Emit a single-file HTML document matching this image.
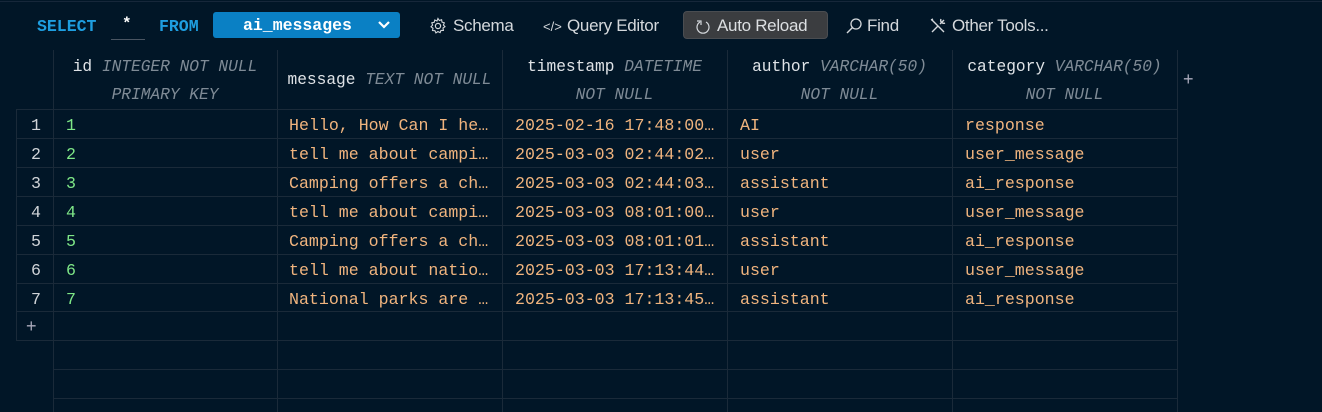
<!DOCTYPE html><html><head><meta charset="utf-8"><style>
body{margin:0;width:1322px;height:412px;background:#011627;overflow:hidden;position:relative;font-family:"Liberation Sans",sans-serif;}
.a{position:absolute;white-space:nowrap}
.mono{font-family:"Liberation Mono",monospace;}
.tb{font-size:17px;color:#d4d8dc;top:16px;letter-spacing:-0.3px}
.vl{position:absolute;width:1px;background:#1a2a39}
.hl{position:absolute;height:1px;background:#1a2a39}
.c{position:absolute;font-family:"Liberation Mono",monospace;font-size:16.6px;white-space:nowrap;color:#f0b47e}
.h{position:absolute;font-family:"Liberation Mono",monospace;font-size:16.2px;color:#dfe3e7;text-align:center;line-height:28px}
.h i{color:#7f8b96}
.n{color:#d0d4d8;text-align:right;width:24px;left:17px}
.g{color:#7ee787}
</style></head><body>
<div class="hl" style="left:0;top:1px;width:1322px;background:#16273a"></div>
<div class="a mono" style="left:37px;top:17px;font-size:16.5px;font-weight:bold;color:#1e9ee0">SELECT</div>
<div class="a mono" style="left:122px;top:15px;font-size:16px;font-weight:bold;color:#fff">*</div>
<div class="hl" style="left:111px;top:39px;width:34px;background:#4a5562"></div>
<div class="a mono" style="left:159px;top:17px;font-size:16.5px;font-weight:bold;color:#1e9ee0">FROM</div>
<div class="a" style="left:213px;top:12px;width:187px;height:26px;background:#0a80c4;border-radius:3px"></div>
<div class="a mono" style="left:243px;top:16px;font-size:16.5px;font-weight:bold;color:#fff">ai_messages</div>
<svg class="a" style="left:377px;top:20px" width="14" height="10"><path d="M2 2l5 5 5-5" stroke="#fff" stroke-width="2.2" fill="none"/></svg>
<svg class="a" style="left:429px;top:17px" width="18" height="18" viewBox="0 0 18 18"><circle cx="9" cy="9" r="2.6" stroke="#d4d8dc" fill="none" stroke-width="1.2"/><path d="M9 1.5l1.3 2 2.3-.8.4 2.4 2.3.7-.9 2.2 1.6 1.7-2 1.3.4 2.4-2.4 0-.9 2.2-2.2-1.1-2 1.4-1-2.2-2.4-.2.5-2.3-2-1.4 1.6-1.7-.8-2.3 2.4-.5.6-2.3 2.2 1z" stroke="#d4d8dc" fill="none" stroke-width="1.1"/></svg>
<div class="a tb" style="left:453px">Schema</div>
<div class="a" style="left:543px;top:19px;font-size:13px;color:#d4d8dc">&lt;/&gt;</div>
<div class="a tb" style="left:567px">Query Editor</div>
<div class="a" style="left:683px;top:11px;width:145px;height:28px;background:#3b3d40;border-radius:4px;border:1px solid #4a4d51;box-sizing:border-box"></div>
<svg class="a" style="left:695px;top:18px" width="16" height="18"><path d="M5 4A6 6 0 1 0 11 4" stroke="#d4d8dc" fill="none" stroke-width="1.2"/><path d="M2 3h4v4" stroke="#d4d8dc" fill="none" stroke-width="1.2"/></svg>
<div class="a tb" style="left:717px;color:#dcdfe2">Auto Reload</div>
<svg class="a" style="left:845px;top:17px" width="18" height="18"><circle cx="11" cy="7" r="5" stroke="#d4d8dc" fill="none" stroke-width="1.3"/><path d="M7.5 10.5L2 16" stroke="#d4d8dc" stroke-width="1.4"/></svg>
<div class="a tb" style="left:867px">Find</div>
<svg class="a" style="left:929px;top:17px" width="18" height="18"><path d="M3 3l12 12M3 15L9 9M11 7l4-4M12 2a3 3 0 0 0 4 4M2 3l2-1" stroke="#d4d8dc" fill="none" stroke-width="1.4"/></svg>
<div class="a tb" style="left:952px">Other Tools...</div>

<div class="vl" style="left:53px;top:50px;height:362px"></div>
<div class="vl" style="left:277px;top:50px;height:362px"></div>
<div class="vl" style="left:502px;top:50px;height:362px"></div>
<div class="vl" style="left:727px;top:50px;height:362px"></div>
<div class="vl" style="left:952px;top:50px;height:362px"></div>
<div class="vl" style="left:1177px;top:50px;height:362px"></div>
<div class="vl" style="left:16px;top:109px;height:232px"></div>
<div class="hl" style="left:16px;top:109px;width:1161px"></div>
<div class="hl" style="left:16px;top:138px;width:1161px"></div>
<div class="hl" style="left:16px;top:167px;width:1161px"></div>
<div class="hl" style="left:16px;top:196px;width:1161px"></div>
<div class="hl" style="left:16px;top:225px;width:1161px"></div>
<div class="hl" style="left:16px;top:254px;width:1161px"></div>
<div class="hl" style="left:16px;top:283px;width:1161px"></div>
<div class="hl" style="left:16px;top:311px;width:1161px"></div>
<div class="hl" style="left:16px;top:340px;width:1161px"></div>
<div class="hl" style="left:53px;top:369px;width:1124px"></div>
<div class="hl" style="left:53px;top:398px;width:1124px"></div>

<div class="h" style="left:53px;top:53px;width:224px">id <i>INTEGER NOT NULL</i><br><i>PRIMARY KEY</i></div>
<div class="h" style="left:277px;top:66px;width:225px">message <i>TEXT NOT NULL</i></div>
<div class="h" style="left:502px;top:53px;width:225px">timestamp <i>DATETIME</i><br><i>NOT NULL</i></div>
<div class="h" style="left:727px;top:53px;width:225px">author <i>VARCHAR(50)</i><br><i>NOT NULL</i></div>
<div class="h" style="left:952px;top:53px;width:225px">category <i>VARCHAR(50)</i><br><i>NOT NULL</i></div>
<div class="a" style="left:1183px;top:69px;font-size:18px;color:#aab">+</div>
<div class="a" style="left:26px;top:316px;font-size:18px;color:#aab">+</div>

<div style="position:absolute;left:0;top:116px">
<div class="c n" style="top:0">1</div><div class="c g" style="left:66px;top:0">1</div><div class="c" style="left:289px;top:0">Hello, How Can I he…</div><div class="c" style="left:515px;top:0">2025-02-16 17:48:00…</div><div class="c" style="left:740px;top:0">AI</div><div class="c" style="left:965px;top:0">response</div>
<div class="c n" style="top:29px">2</div><div class="c g" style="left:66px;top:29px">2</div><div class="c" style="left:289px;top:29px">tell me about campi…</div><div class="c" style="left:515px;top:29px">2025-03-03 02:44:02…</div><div class="c" style="left:740px;top:29px">user</div><div class="c" style="left:965px;top:29px">user_message</div>
<div class="c n" style="top:58px">3</div><div class="c g" style="left:66px;top:58px">3</div><div class="c" style="left:289px;top:58px">Camping offers a ch…</div><div class="c" style="left:515px;top:58px">2025-03-03 02:44:03…</div><div class="c" style="left:740px;top:58px">assistant</div><div class="c" style="left:965px;top:58px">ai_response</div>
<div class="c n" style="top:87px">4</div><div class="c g" style="left:66px;top:87px">4</div><div class="c" style="left:289px;top:87px">tell me about campi…</div><div class="c" style="left:515px;top:87px">2025-03-03 08:01:00…</div><div class="c" style="left:740px;top:87px">user</div><div class="c" style="left:965px;top:87px">user_message</div>
<div class="c n" style="top:116px">5</div><div class="c g" style="left:66px;top:116px">5</div><div class="c" style="left:289px;top:116px">Camping offers a ch…</div><div class="c" style="left:515px;top:116px">2025-03-03 08:01:01…</div><div class="c" style="left:740px;top:116px">assistant</div><div class="c" style="left:965px;top:116px">ai_response</div>
<div class="c n" style="top:145px">6</div><div class="c g" style="left:66px;top:145px">6</div><div class="c" style="left:289px;top:145px">tell me about natio…</div><div class="c" style="left:515px;top:145px">2025-03-03 17:13:44…</div><div class="c" style="left:740px;top:145px">user</div><div class="c" style="left:965px;top:145px">user_message</div>
<div class="c n" style="top:174px">7</div><div class="c g" style="left:66px;top:174px">7</div><div class="c" style="left:289px;top:174px">National parks are …</div><div class="c" style="left:515px;top:174px">2025-03-03 17:13:45…</div><div class="c" style="left:740px;top:174px">assistant</div><div class="c" style="left:965px;top:174px">ai_response</div>
</div>
</body></html>
